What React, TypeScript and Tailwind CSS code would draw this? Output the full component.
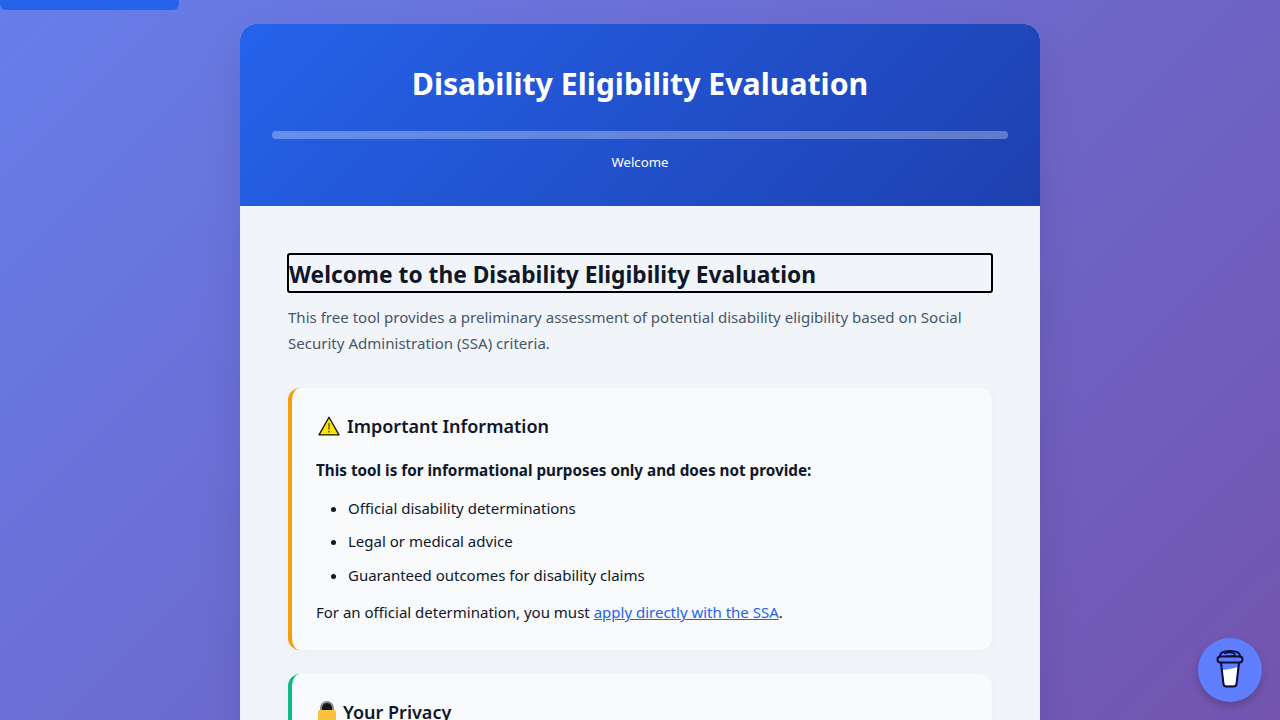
const font = "font-['Noto_Sans','Open_Sans',sans-serif]";

function WarningIcon() {
  return (
    <svg viewBox="0 0 22 20" className="ml-0.5 h-5 w-[22px] shrink-0">
      <path d="M11 1.200 21 18.900H1Z" fill="#fce300" stroke="#111" strokeWidth="1.300" strokeLinejoin="round" />
      <rect x="10.300" y="7" width="1.400" height="6.500" fill="#6b5200" />
      <rect x="10.200" y="14.800" width="1.600" height="1.700" fill="#6b5200" />
    </svg>
  );
}

function LockIcon() {
  return (
    <svg viewBox="0 0 18 22" className="ml-0.5 h-[22px] w-[18px] shrink-0">
      <path d="M3 11V7a6 6 0 0 1 12 0v4Z" fill="#151515" stroke="#8a8a8a" strokeWidth="2" />
      <rect x="0" y="9" width="18" height="13" rx="2" fill="#fcc13f" />
    </svg>
  );
}

function CoffeeIcon() {
  return (
    <svg viewBox="0 0 36 44" className="h-11 w-9" fill="none" stroke="#0d0c3a" strokeWidth="2">
      <path d="M10.500 22c5-1 9.500-1 15-3l-1.500 17c-.2 1-.8 1.500-2 1.500h-8c-1.200 0-1.800-.5-2-1.500Z" fill="#fff" stroke="none" />
      <path d="M9 15l2.500 21c.3 1.700 1.200 2.500 2.700 2.500h7.600c1.500 0 2.400-.8 2.700-2.500L27 15" />
      <path d="M8 8c0-3.500 5-5 10-5s10 1.500 10 5" />
      <path d="M12 5.500c4-1.500 11-1 11 1.200 0 1.500-5 1.800-9 1.300" strokeWidth="1.500" />
      <rect x="5.500" y="8.500" width="25" height="6" rx="3" fill="#5f7fff" />
    </svg>
  );
}

export default function App() {
  return (
    <div className={`${font} relative h-screen overflow-hidden text-[#0f172a]`}>
      {/* skip link, mostly off the top edge */}
      <div className="absolute left-0 top-0 h-2.5 w-[179px] rounded-b-md bg-[#2563eb]" />

      {/* page runs on below the fold, so the gradient is taller than the window */}
      <div className="h-[1160px] bg-[linear-gradient(135deg,#667eea_0%,#764ba2_100%)] pt-6">
        <div className="mx-auto w-[800px] overflow-hidden rounded-2xl bg-[#f1f5f9] shadow-[0_20px_40px_rgba(0,0,0,0.1)]">
          <header className="h-[182px] bg-[linear-gradient(135deg,#2563eb_0%,#1e40af_100%)] px-8 pt-[33px] text-center text-white">
            <h1 className="text-[30.250px] font-bold leading-[54px]">Disability Eligibility Evaluation</h1>
            <div className="mt-5 h-2 rounded-full bg-white/30" />
            <p className="mt-3 text-[13.200px] leading-[22px]">Welcome</p>
          </header>

          <main className="px-12 pt-[47px]">
            <h2 className="-mx-px rounded-[3px] border-2 border-black pt-1 text-[22.750px] font-bold leading-[32px]">
              Welcome to the Disability Eligibility Evaluation
            </h2>
            <p className="mt-[11px] text-[15.050px] leading-[26px] text-[#475569]">
              This free tool provides a preliminary assessment of potential disability eligibility based on Social Security Administration (SSA) criteria.
            </p>

            <section className="mt-8 rounded-xl border-l-4 border-[#f59e0b] bg-[#f8fafc] px-6 pb-[26px] pt-[22px] shadow-[0_2px_8px_rgba(0,0,0,0.03)]">
              <h3 className="flex items-center gap-[7px] text-lg font-semibold leading-[32px]">
                <WarningIcon />
                Important Information
              </h3>
              <p className="mt-4 text-[15.250px] font-bold leading-6">
                This tool is for informational purposes only and does not provide:
              </p>
              <ul className="mt-3.5 list-disc pl-8 text-[15px] leading-6">
                <li className="mb-[9px]">Official disability determinations</li>
                <li className="mb-2.5">Legal or medical advice</li>
                <li>Guaranteed outcomes for disability claims</li>
              </ul>
              <p className="mt-[13px] text-[15px] leading-6">
                For an official determination, you must{" "}
                <a href="#ssa" className="text-[#2563eb] underline">apply directly with the SSA</a>.
              </p>
            </section>

            <section className="mt-6 h-[200px] rounded-xl border-l-4 border-[#10b981] bg-[#f8fafc] px-6 pt-[22px] shadow-[0_2px_8px_rgba(0,0,0,0.03)]">
              <h3 className="flex items-center gap-[7px] text-lg font-semibold leading-[32px]">
                <LockIcon />
                Your Privacy
              </h3>
            </section>
          </main>
        </div>
      </div>

      <button className="absolute bottom-[18px] right-[18px] flex h-16 w-16 items-center justify-center rounded-full bg-[#5f7fff] shadow-[0_4px_8px_rgba(0,0,0,0.2)]">
        <CoffeeIcon />
      </button>
    </div>
  );
}
